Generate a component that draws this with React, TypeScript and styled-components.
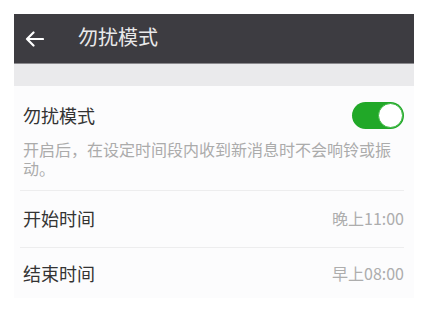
import React from "react";
import styled, { createGlobalStyle } from "styled-components";

const Global = createGlobalStyle`
  html, body { margin: 0; padding: 0; background: #ffffff; }
  body { font-family: "Noto Sans CJK SC", "Noto Sans", sans-serif; }
`;

const Page = styled.div`
  padding: 14px 28px 0 14px;
`;

const Card = styled.div`
  width: 400px;
  background: #fcfcfd;
  display: flex;
  flex-direction: column;
`;

const Header = styled.div`
  background: #3d3c41;
  border-bottom: 1px solid #8a898d;
  display: flex;
  align-items: center;
  padding-left: 11px;
  gap: 34px;
  box-sizing: border-box;
  height: 50px;
`;

const Title = styled.div`
  color: #e9e9ea;
  font-size: 20px;
  line-height: 1;
  margin-top: -3px;
`;

const Band = styled.div`
  height: 22px;
  background: #eaeaec;
`;

const Section = styled.div`
  padding: 0 10px 0 9px;
  display: flex;
  flex-direction: column;
`;

const SwitchBlock = styled.div`
  padding: 14px 0 12px 3px;
  border-bottom: 1px solid #ededee;
  margin-left: -3px;
`;

const Row = styled.div<{ $height?: number }>`
  display: flex;
  align-items: center;
  justify-content: space-between;
  height: ${(p) => p.$height ?? 56}px;
`;

const DividedRow = styled(Row)`
  border-bottom: 1px solid #ededee;
  margin-left: -3px;
  padding-left: 3px;
  padding-bottom: 2px;
  box-sizing: border-box;
`;

const Label = styled.div`
  color: #333333;
  font-size: 18px;
  line-height: 1;
`;

const Value = styled.div`
  color: #adadad;
  font-size: 16px;
  line-height: 1;
`;

const Desc = styled.div`
  color: #ababab;
  font-size: 16px;
  line-height: 19px;
  margin-top: 10px;
  padding-right: 8px;
`;

const Track = styled.div<{ $on: boolean }>`
  width: 52px;
  height: 27px;
  border-radius: 14px;
  background: ${(p) => (p.$on ? "#21a828" : "#e5e5e5")};
  display: flex;
  align-items: center;
  justify-content: ${(p) => (p.$on ? "flex-end" : "flex-start")};
  padding: 1px;
  box-sizing: border-box;
`;

const Knob = styled.div`
  width: 25px;
  height: 25px;
  border-radius: 50%;
  background: #ffffff;
  box-sizing: border-box;
  border: 1px solid #3db843;
`;

const Toggle = ({ on }: { on: boolean }) => (
  <Track $on={on}>
    <Knob />
  </Track>
);

const BackArrow = () => (
  <svg width="19" height="16" viewBox="0 0 19 16" fill="none">
    <path
      d="M18 8H2M8.5 1.5L2 8l6.5 6.5"
      stroke="#ffffff"
      strokeWidth="2.2"
      strokeLinecap="round"
      strokeLinejoin="round"
    />
  </svg>
);

export default function App() {
  return (
    <>
      <Global />
      <Page>
        <Card>
          <Header>
            <BackArrow />
            <Title>勿扰模式</Title>
          </Header>
          <Band />
          <Section>
            <SwitchBlock>
              <Row $height={30}>
                <Label>勿扰模式</Label>
                <Toggle on={true} />
              </Row>
              <Desc>开启后，在设定时间段内收到新消息时不会响铃或振动。</Desc>
            </SwitchBlock>
            <DividedRow $height={57}>
              <Label>开始时间</Label>
              <Value>晚上11:00</Value>
            </DividedRow>
            <Row $height={50}>
              <Label>结束时间</Label>
              <Value>早上08:00</Value>
            </Row>
          </Section>
        </Card>
      </Page>
    </>
  );
}
